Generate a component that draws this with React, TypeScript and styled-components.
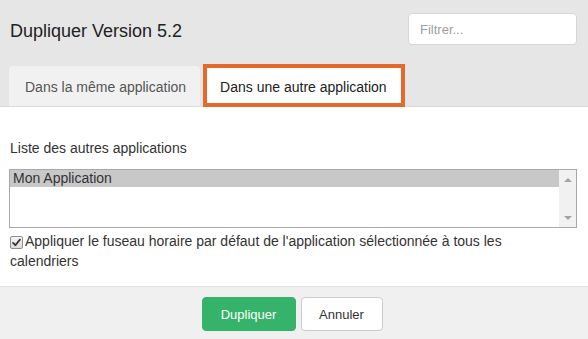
import React from 'react';
import styled, { createGlobalStyle } from 'styled-components';

const GlobalStyle = createGlobalStyle`
  body {
    margin: 0;
    background: #ffffff;
    font-family: 'Liberation Sans', Arial, sans-serif;
    color: #333333;
  }
`;

const Dialog = styled.div`
  width: 588px;
  height: 339px;
  overflow: hidden;
  display: flex;
  flex-direction: column;
`;

const Header = styled.div`
  background: #e6e6e6;
  border-bottom: 1px solid #dadada;
  height: 107px;
  box-sizing: border-box;
  display: flex;
  flex-direction: column;
`;

const TitleRow = styled.div`
  display: flex;
  align-items: center;
  justify-content: space-between;
  padding: 13px 11px 0 10px;
  height: 32px;
`;

const Title = styled.h1`
  margin: 0;
  font-size: 18px;
  font-weight: normal;
  color: #222222;
  padding-top: 4px;
`;

const FilterInput = styled.input`
  width: 169px;
  height: 32px;
  box-sizing: border-box;
  border: 1px solid #d6d6d6;
  border-radius: 4px;
  padding: 0 11px;
  font-family: inherit;
  font-size: 13px;
  outline: none;
  &::placeholder {
    color: #a0a0a0;
  }
`;

const TabRow = styled.div`
  display: flex;
  align-items: flex-end;
  gap: 3px;
  padding-left: 9px;
  margin-top: auto;
`;

const Tab = styled.div<{ $active?: boolean }>`
  display: flex;
  align-items: center;
  box-sizing: border-box;
  font-size: 14px;
  white-space: nowrap;
  ${p =>
    p.$active
      ? `
    height: 43px;
    margin-bottom: -1px;
    padding: 2px 14px 0 13px;
    background: #ffffff;
    border: 4px solid #e5692a;
    color: #222222;
  `
      : `
    height: 40px;
    padding: 1px 14px 0 16px;
    background: #f1f1f1;
    border-radius: 4px 4px 0 0;
    color: #555555;
  `}
`;

const Body = styled.div`
  padding: 31px 11px 0 9px;
  flex: 1;
`;

const Label = styled.div`
  font-size: 14px;
  line-height: 20px;
  padding-left: 1px;
  color: #333333;
`;

const ListBox = styled.div`
  margin-top: 11px;
  height: 59px;
  box-sizing: border-box;
  border: 1px solid #a9a9a9;
  display: flex;
`;

const Options = styled.div`
  flex: 1;
`;

const Option = styled.div<{ $selected?: boolean }>`
  height: 17px;
  line-height: 17px;
  font-size: 14px;
  padding-left: 3px;
  color: #333333;
  background: ${p => (p.$selected ? '#c8c8c8' : 'transparent')};
`;

const Scrollbar = styled.div`
  width: 17px;
  background: #f1f1f1;
  display: flex;
  flex-direction: column;
  justify-content: space-between;
  align-items: center;
  padding: 8px 0 7px;
`;

const Arrow = styled.span<{ $down?: boolean }>`
  width: 0;
  height: 0;
  border-left: 4px solid transparent;
  border-right: 4px solid transparent;
  ${p => (p.$down ? 'border-top: 4px solid #a3a3a3;' : 'border-bottom: 4px solid #a3a3a3;')}
`;

const CheckRow = styled.label`
  display: block;
  margin-top: 3px;
  padding: 0 14px 0 1px;
  font-size: 14px;
  line-height: 20px;
  color: #333333;
`;

const CheckBox = styled.span`
  display: inline-flex;
  vertical-align: -1px;
  width: 13px;
  height: 13px;
  box-sizing: border-box;
  margin-right: 2px;
  border: 1px solid #8f8f8f;
  border-radius: 2px;
  background: linear-gradient(#f4f4f4, #dcdcdc);
  align-items: center;
  justify-content: center;
`;

const Footer = styled.div`
  border-top: 1px solid #e2e2e2;
  background: #f0f0f0;
  height: 53px;
  box-sizing: border-box;
  display: flex;
  justify-content: center;
  align-items: flex-start;
  gap: 5px;
  padding: 10px 4px 0 0;
`;

const Button = styled.button<{ $primary?: boolean }>`
  height: 34px;
  box-sizing: border-box;
  border-radius: 4px;
  font-family: inherit;
  font-size: 13px;
  padding: 0;
  width: ${p => (p.$primary ? '94px' : '82px')};
  border: 1px solid ${p => (p.$primary ? '#36b36a' : '#cccccc')};
  background: ${p => (p.$primary ? '#36b36a' : '#ffffff')};
  color: ${p => (p.$primary ? '#ffffff' : '#333333')};
`;

export default function App() {
  return (
    <>
      <GlobalStyle />
      <Dialog>
        <Header>
          <TitleRow>
            <Title>Dupliquer Version 5.2</Title>
            <FilterInput placeholder="Filtrer..." />
          </TitleRow>
          <TabRow>
            <Tab>Dans la même application</Tab>
            <Tab $active>Dans une autre application</Tab>
          </TabRow>
        </Header>
        <Body>
          <Label>Liste des autres applications</Label>
          <ListBox>
            <Options>
              <Option $selected>Mon Application</Option>
            </Options>
            <Scrollbar>
              <Arrow />
              <Arrow $down />
            </Scrollbar>
          </ListBox>
          <CheckRow>
            <CheckBox>
              <svg width="9" height="9" viewBox="0 0 10 10">
                <path d="M1.2 5.4 L3.8 8 L8.8 1.8" fill="none" stroke="#333" strokeWidth="2" strokeLinecap="round" strokeLinejoin="round" />
              </svg>
            </CheckBox>
            Appliquer le fuseau horaire par défaut de l'application sélectionnée à tous les calendriers
          </CheckRow>
        </Body>
        <Footer>
          <Button $primary>Dupliquer</Button>
          <Button>Annuler</Button>
        </Footer>
      </Dialog>
    </>
  );
}
